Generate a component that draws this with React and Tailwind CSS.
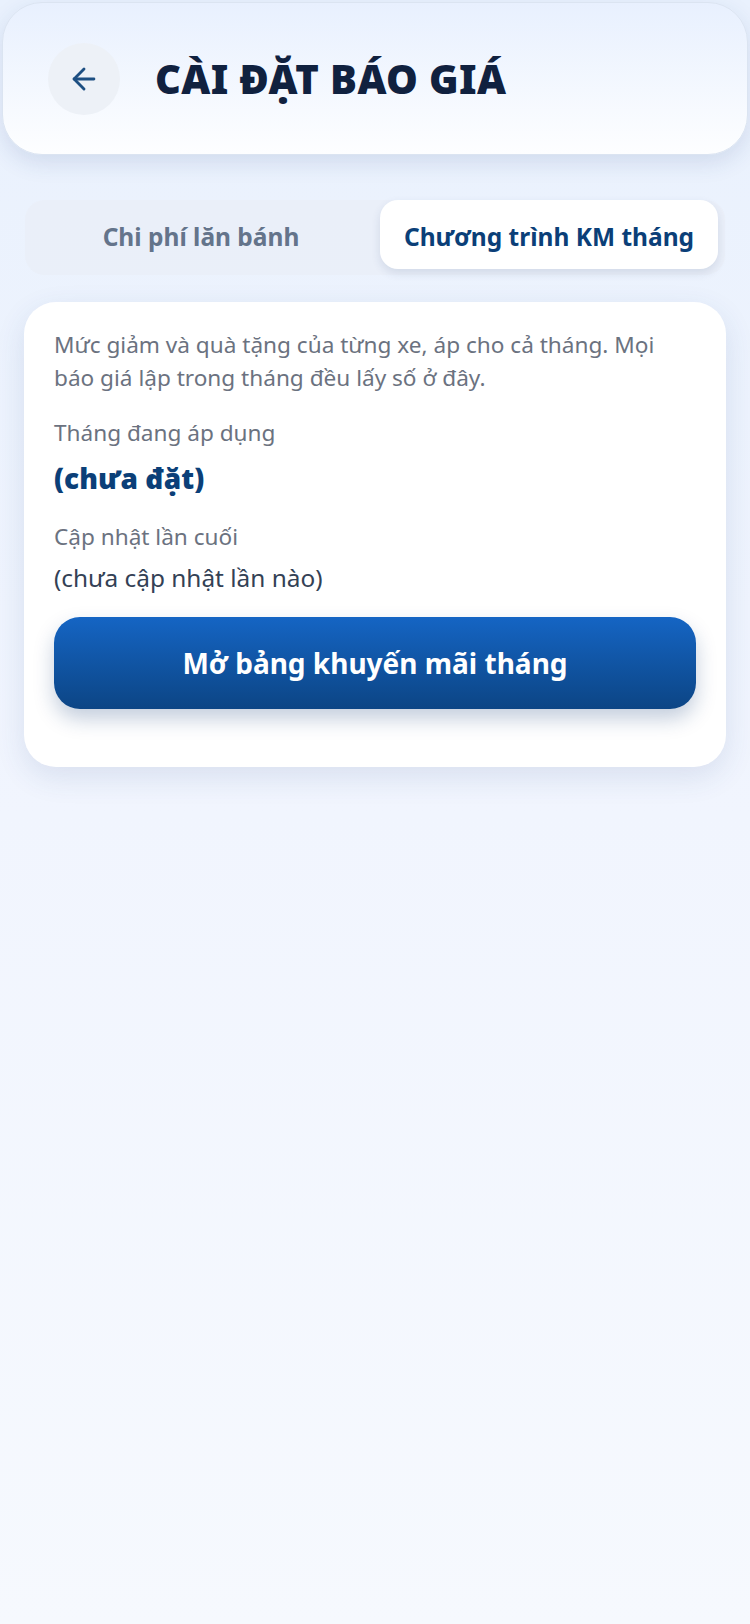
import React from 'react';

const font = { fontFamily: '"Noto Sans", "Open Sans", sans-serif' };

const BackArrow = () => (
  <svg width="34" height="34" viewBox="0 0 24 24" fill="none" stroke="#1d4f82" strokeWidth="2" strokeLinecap="round" strokeLinejoin="round">
    <path d="M19 12H5" />
    <path d="M12 19l-7-7 7-7" />
  </svg>
);

export default function App() {
  return (
    <div className="min-h-[1624px] w-[750px] bg-gradient-to-b from-[#e9f1fd] via-[#f1f5fe] to-[#f6f9fe] pt-[2px]" style={font}>
      {/* Header */}
      <div className="mx-[2px] h-[153px] rounded-[40px] border border-[#dbe4f1] bg-gradient-to-b from-[#e8f0fe] to-[#fdfeff] shadow-[0_8px_22px_rgba(40,70,130,0.13)] flex items-center pl-[45px]">
        <button className="w-[72px] h-[72px] rounded-full bg-[#edf1f7] flex items-center justify-center">
          <BackArrow />
        </button>
        <h1 className="ml-[35px] text-[40px] font-black tracking-[0.4px] text-[#10213f]">CÀI ĐẶT BÁO GIÁ</h1>
      </div>

      {/* Tabs */}
      <div className="mx-[25px] mt-[45px] h-[75px] rounded-[20px] bg-[#e9eef6]/70 grid grid-cols-2 gap-[10px] px-[7px] pt-0 pb-[6px]">
        <button className="rounded-[18px] flex items-center justify-center pt-[5px] text-[24.5px] font-bold text-[#64748b]">
          Chi phí lăn bánh
        </button>
        <button className="rounded-[18px] bg-white shadow-[0_4px_10px_rgba(30,60,110,0.12)] flex items-center justify-center pt-[5px] text-[24.5px] font-bold text-[#0b3f78]">
          Chương trình KM tháng
        </button>
      </div>

      {/* Card */}
      <div className="mx-[24px] mt-[27px] rounded-[32px] bg-white shadow-[0_10px_30px_rgba(40,70,130,0.12)] pl-[30px] pr-[30px] pt-[26px] pb-[58px]">
        <p className="text-[22.6px] leading-[33px] text-[#6b7280] pr-[10px]">
          Mức giảm và quà tặng của từng xe, áp cho cả tháng. Mọi báo giá lập trong tháng đều lấy số ở đây.
        </p>
        <div className="mt-[22px] text-[22.6px] leading-[33px] text-[#6b7280]">Tháng đang áp dụng</div>
        <div className="mt-[11px] text-[28px] leading-[36px] font-black text-[#0b3f78]">(chưa đặt)</div>
        <div className="mt-[24px] text-[22.6px] leading-[33px] text-[#6b7280]">Cập nhật lần cuối</div>
        <div className="mt-[8px] text-[24.4px] leading-[34px] text-[#334155]">(chưa cập nhật lần nào)</div>
        <button className="mt-[22px] w-full h-[92px] rounded-[26px] bg-gradient-to-b from-[#1565c4] to-[#0c4585] shadow-[0_10px_20px_rgba(20,60,120,0.25)] text-white text-[28px] font-bold">
          Mở bảng khuyến mãi tháng
        </button>
      </div>
    </div>
  );
}
